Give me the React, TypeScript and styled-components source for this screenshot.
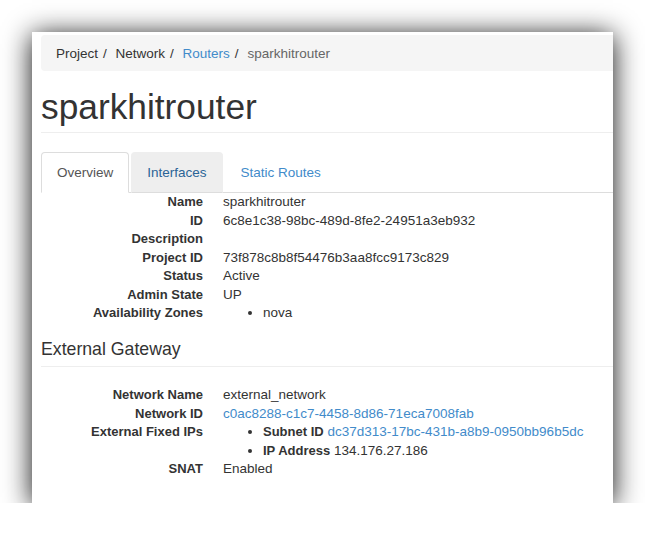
import React from 'react';
import styled, { createGlobalStyle } from 'styled-components';

const GlobalStyle = createGlobalStyle`
  body {
    margin: 0;
    background: #fff;
    font-family: "Liberation Sans", Arial, Helvetica, sans-serif;
    font-size: 13.5px;
    color: #333;
  }
`;

const Page = styled.div`
  padding: 32px 0 0 32px;
`;

const Card = styled.div`
  width: 581px;
  height: 471px;
  box-sizing: border-box;
  padding: 3px 0 0 9px;
  background: #fff;
  overflow: hidden;
  box-shadow: 0 3px 26px rgba(0, 0, 0, 0.95);
`;

const Breadcrumb = styled.ol`
  display: flex;
  align-items: center;
  height: 36px;
  margin: 0;
  padding: 0 15px;
  list-style: none;
  background: #f5f5f5;
  border-radius: 4px 0 0 4px;
`;

const Crumb = styled.li<{ $tone?: 'link' | 'active' }>`
  color: ${p => (p.$tone === 'link' ? '#428bca' : p.$tone === 'active' ? '#666' : '#333')};

  &:not(:first-child)::before {
    content: '/\\00a0';
    padding: 0 5px;
    color: #333;
  }
`;

const Title = styled.h1`
  margin: 16px 0 0;
  padding-bottom: 5px;
  border-bottom: 1px solid #eee;
  font-size: 35.3px;
  line-height: 40px;
  font-weight: normal;
  color: #333;
`;

const Tabs = styled.ul`
  display: flex;
  margin: 19px 0 0;
  padding: 0;
  list-style: none;
  border-bottom: 1px solid #ddd;
`;

const Tab = styled.li<{ $state?: 'active' | 'hover' }>`
  margin: 0 2px -1px 0;
  padding: 10px 15px;
  line-height: 19px;
  border: 1px solid transparent;
  border-radius: 4px 4px 0 0;
  color: #428bca;

  ${p =>
    p.$state === 'active' &&
    `
    color: #555;
    background: #fff;
    border-color: #ddd #ddd transparent;
  `}

  ${p =>
    p.$state === 'hover' &&
    `
    color: #2a6496;
    background: #eee;
    border-color: #eee #eee #ddd;
  `}
`;

const Details = styled.dl<{ $top?: number }>`
  display: grid;
  grid-template-columns: 162px 1fr;
  column-gap: 20px;
  margin: ${p => p.$top ?? 0}px 0 0;
  line-height: 18.5px;
`;

const Label = styled.dt`
  text-align: right;
  font-size: 13px;
  font-weight: bold;
  white-space: nowrap;
`;

const Value = styled.dd`
  margin: 0;
  white-space: nowrap;

  b {
    font-size: 13px;
  }
`;

const Bullets = styled.ul`
  margin: 0;
  padding-left: 40px;
  list-style: disc;
`;

const Link = styled.a`
  color: #428bca;
  text-decoration: none;
`;

const SectionTitle = styled.h3`
  margin: 16.5px 0 0;
  padding-bottom: 7px;
  border-bottom: 1px solid #eee;
  font-size: 17.7px;
  line-height: 20px;
  font-weight: normal;
  color: #333;
`;

const overview: [string, React.ReactNode][] = [
  ['Name', 'sparkhitrouter'],
  ['ID', '6c8e1c38-98bc-489d-8fe2-24951a3eb932'],
  ['Description', ''],
  ['Project ID', '73f878c8b8f54476b3aa8fcc9173c829'],
  ['Status', 'Active'],
  ['Admin State', 'UP'],
  [
    'Availability Zones',
    <Bullets>
      <li>nova</li>
    </Bullets>,
  ],
];

const gateway: [string, React.ReactNode][] = [
  ['Network Name', 'external_network'],
  ['Network ID', <Link href="#">c0ac8288-c1c7-4458-8d86-71eca7008fab</Link>],
  [
    'External Fixed IPs',
    <Bullets>
      <li>
        <b>Subnet ID</b> <Link href="#">dc37d313-17bc-431b-a8b9-0950bb96b5dc</Link>
      </li>
      <li>
        <b>IP Address</b> 134.176.27.186
      </li>
    </Bullets>,
  ],
  ['SNAT', 'Enabled'],
];

const App: React.FC = () => (
  <>
    <GlobalStyle />
    <Page>
      <Card>
        <Breadcrumb>
          <Crumb>Project</Crumb>
          <Crumb>Network</Crumb>
          <Crumb $tone="link">Routers</Crumb>
          <Crumb $tone="active">sparkhitrouter</Crumb>
        </Breadcrumb>

        <Title>sparkhitrouter</Title>

        <Tabs>
          <Tab $state="active">Overview</Tab>
          <Tab $state="hover">Interfaces</Tab>
          <Tab>Static Routes</Tab>
        </Tabs>

        <Details>
          {overview.map(([k, v]) => (
            <React.Fragment key={k}>
              <Label>{k}</Label>
              <Value>{v || '\u00a0'}</Value>
            </React.Fragment>
          ))}
        </Details>

        <SectionTitle>External Gateway</SectionTitle>

        <Details $top={19}>
          {gateway.map(([k, v]) => (
            <React.Fragment key={k}>
              <Label>{k}</Label>
              <Value>{v}</Value>
            </React.Fragment>
          ))}
        </Details>
      </Card>
    </Page>
  </>
);

export default App;
